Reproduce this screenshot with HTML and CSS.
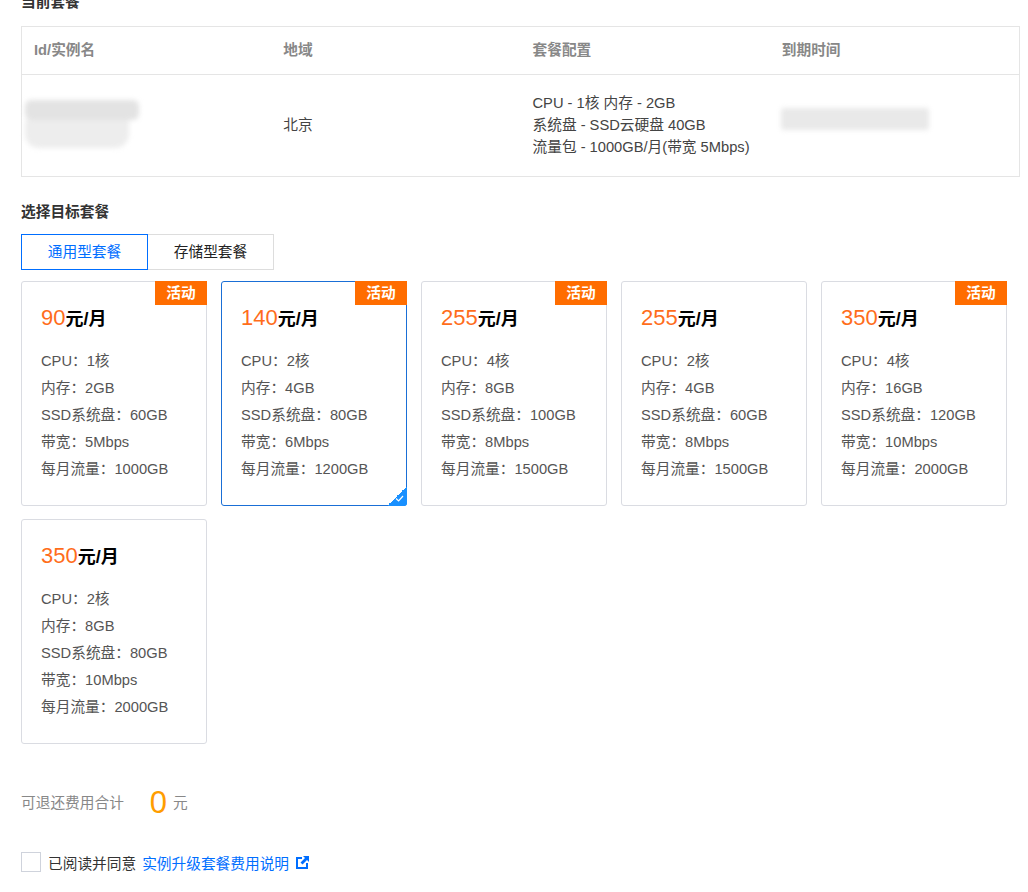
FILE: index.html
```html
<!DOCTYPE html>
<html lang="zh-CN">
<head>
<meta charset="utf-8">
<title>实例升级套餐</title>
<link rel="stylesheet" href="styles.css">
</head>
<body>
<div class="page">
  <div class="section-title first">当前套餐</div>
  <div class="cur-table">
    <div class="cell head">Id/实例名</div>
    <div class="cell head">地域</div>
    <div class="cell head">套餐配置</div>
    <div class="cell head">到期时间</div>
    <div class="cell body">
      <div class="blur-id">
        <span class="b1"></span>
        <span class="b2"></span>
      </div>
    </div>
    <div class="cell body">北京</div>
    <div class="cell body">
      <div>CPU - 1核 内存 - 2GB</div>
      <div>系统盘 - SSD云硬盘 40GB</div>
      <div>流量包 - 1000GB/月(带宽 5Mbps)</div>
    </div>
    <div class="cell body">
      <div class="blur-date"></div>
    </div>
  </div>

  <div class="section-title second">选择目标套餐</div>
  <div class="tabs">
    <div class="tab active">通用型套餐</div>
    <div class="tab">存储型套餐</div>
  </div>

  <div class="cards">
    <div class="card">
      <div class="badge">活动</div>
      <div class="price"><span class="num">90</span><span class="unit">元/月</span></div>
      <ul class="specs">
        <li>CPU：1核</li><li>内存：2GB</li><li>SSD系统盘：60GB</li><li>带宽：5Mbps</li><li>每月流量：1000GB</li>
      </ul>
    </div>
    <div class="card selected">
      <div class="badge">活动</div>
      <div class="price"><span class="num">140</span><span class="unit">元/月</span></div>
      <ul class="specs">
        <li>CPU：2核</li><li>内存：4GB</li><li>SSD系统盘：80GB</li><li>带宽：6Mbps</li><li>每月流量：1200GB</li>
      </ul>
      <div class="corner">
        <svg width="9" height="7" viewBox="0 0 9 7"><path d="M1 3.5 L3.6 6 L8 1" fill="none" stroke="#fff" stroke-width="1.2"/></svg>
      </div>
    </div>
    <div class="card">
      <div class="badge">活动</div>
      <div class="price"><span class="num">255</span><span class="unit">元/月</span></div>
      <ul class="specs">
        <li>CPU：4核</li><li>内存：8GB</li><li>SSD系统盘：100GB</li><li>带宽：8Mbps</li><li>每月流量：1500GB</li>
      </ul>
    </div>
    <div class="card">
      <div class="price"><span class="num">255</span><span class="unit">元/月</span></div>
      <ul class="specs">
        <li>CPU：2核</li><li>内存：4GB</li><li>SSD系统盘：60GB</li><li>带宽：8Mbps</li><li>每月流量：1500GB</li>
      </ul>
    </div>
    <div class="card">
      <div class="badge">活动</div>
      <div class="price"><span class="num">350</span><span class="unit">元/月</span></div>
      <ul class="specs">
        <li>CPU：4核</li><li>内存：16GB</li><li>SSD系统盘：120GB</li><li>带宽：10Mbps</li><li>每月流量：2000GB</li>
      </ul>
    </div>
    <div class="card">
      <div class="price"><span class="num">350</span><span class="unit">元/月</span></div>
      <ul class="specs">
        <li>CPU：2核</li><li>内存：8GB</li><li>SSD系统盘：80GB</li><li>带宽：10Mbps</li><li>每月流量：2000GB</li>
      </ul>
    </div>
  </div>

  <div class="refund">
    <span class="refund-label">可退还费用合计</span>
    <span class="refund-num">0</span>
    <span class="refund-unit">元</span>
  </div>

  <div class="agree">
    <span class="checkbox"></span>
    <span class="agree-text">已阅读并同意</span>
    <a class="agree-link" href="#">实例升级套餐费用说明</a>
    <svg class="ext-icon" width="13" height="13" viewBox="0 0 13 13">
      <path d="M0 1 H6 V3 H2 V11 H10 V7 H12 V13 H0 Z" fill="#006eff"/>
      <path d="M7 0 H13 V6 L11 4 L6.5 8.5 L4.5 6.5 L9 2 Z" fill="#006eff"/>
    </svg>
  </div>
</div>
</body>
</html>
```

FILE: styles.css
```css
* { box-sizing: border-box; }

html, body {
  margin: 0;
  padding: 0;
  background: #fff;
}

body {
  font-family: "Liberation Sans", Arial, "Noto Sans CJK SC", sans-serif;
  font-size: 14.7px;
  color: #444;
}

.page {
  padding: 0 8px 0 21px;
}

.section-title {
  font-weight: bold;
  color: #333;
  line-height: 20px;
  font-size: 14.7px;
}

.section-title.first {
  margin-top: -8px;
}

.cur-table {
  margin-top: 14px;
  width: 999px;
  border: 1px solid #e5e5e5;
  display: grid;
  grid-template-columns: repeat(4, 1fr);
}

.cell {
  padding-left: 12px;
}

.cell.head {
  height: 48px;
  line-height: 47px;
  border-bottom: 1px solid #e5e5e5;
  color: #888;
  font-weight: bold;
}

.cell.body {
  height: 101px;
  padding-top: 17px;
  line-height: 22px;
  color: #444;
  display: flex;
  flex-direction: column;
  justify-content: flex-start;
}

.cell.body:nth-child(6) {
  justify-content: center;
  padding-top: 0;
  padding-bottom: 2px;
}

.blur-id {
  margin-left: -9px;
  margin-top: 8px;
  width: 118px;
  display: flex;
  flex-direction: column;
  filter: blur(2.5px);
}

.blur-id .b1 {
  display: block;
  height: 20px;
  width: 114px;
  background: #e3e3e3;
  border-radius: 6px;
}

.blur-id .b2 {
  display: block;
  height: 28px;
  width: 104px;
  background: #ededed;
  border-radius: 0 0 14px 14px;
}

.blur-date {
  margin-left: -1px;
  margin-top: 16px;
  width: 148px;
  height: 22px;
  background: #e9e9e9;
  filter: blur(2.5px);
  border-radius: 3px;
}

.second {
  margin-top: 25px;
}

.tabs {
  margin-top: 12px;
  display: flex;
}

.tab {
  height: 36px;
  line-height: 34px;
  text-align: center;
  border: 1px solid #dddddd;
  border-left: none;
  width: 126px;
  color: #222;
}

.tab.active {
  width: 127px;
  border: 1px solid #006eff;
  color: #006eff;
}

.cards {
  margin-top: 11px;
  display: grid;
  grid-template-columns: repeat(5, 186px);
  column-gap: 14px;
  row-gap: 13px;
}

.card {
  position: relative;
  height: 225px;
  border: 1px solid #dadce2;
  border-radius: 3px;
  padding: 21px 18px 0 19px;
}

.card.selected {
  border-color: #1a6fd6;
}

.badge {
  position: absolute;
  top: -1px;
  right: -1px;
  width: 52px;
  height: 24px;
  line-height: 24px;
  text-align: center;
  background: #ff6d00;
  color: #fff;
  font-weight: bold;
  font-size: 14.7px;
}

.price {
  line-height: 30px;
  white-space: nowrap;
}

.price .num {
  font-size: 22px;
  color: #ff6d1b;
}

.price .unit {
  font-size: 18px;
  font-weight: bold;
  color: #000;
}

.specs {
  list-style: none;
  margin: 13px 0 0;
  padding: 0;
}

.specs li {
  line-height: 27px;
  color: #555;
  white-space: nowrap;
}

.corner {
  position: absolute;
  right: -1px;
  bottom: -1px;
  width: 20px;
  height: 20px;
  background: linear-gradient(135deg, transparent 50%, #1990ff 50%);
  border-bottom-right-radius: 3px;
  display: flex;
  align-items: flex-end;
  justify-content: flex-end;
  padding: 0 3px 4px 0;
}

.corner svg {
  display: block;
}

.refund {
  margin-top: 39px;
  height: 40px;
  display: flex;
  align-items: center;
}

.refund-label {
  color: #888;
  line-height: 20px;
}

.refund-num {
  margin-left: 26px;
  font-size: 31px;
  line-height: 40px;
  color: #ff9d00;
}

.refund-unit {
  margin-left: 6px;
  color: #888;
  line-height: 20px;
}

.agree {
  margin-top: 29px;
  display: flex;
  align-items: center;
  height: 20px;
}

.checkbox {
  width: 20px;
  height: 20px;
  border: 1px solid #cfd3dc;
  background: #fff;
}

.agree-text {
  margin-left: 7px;
  color: #333;
}

.agree-link {
  margin-left: 6px;
  color: #006eff;
  text-decoration: none;
}

.ext-icon {
  margin-left: 7px;
  display: block;
}
```
